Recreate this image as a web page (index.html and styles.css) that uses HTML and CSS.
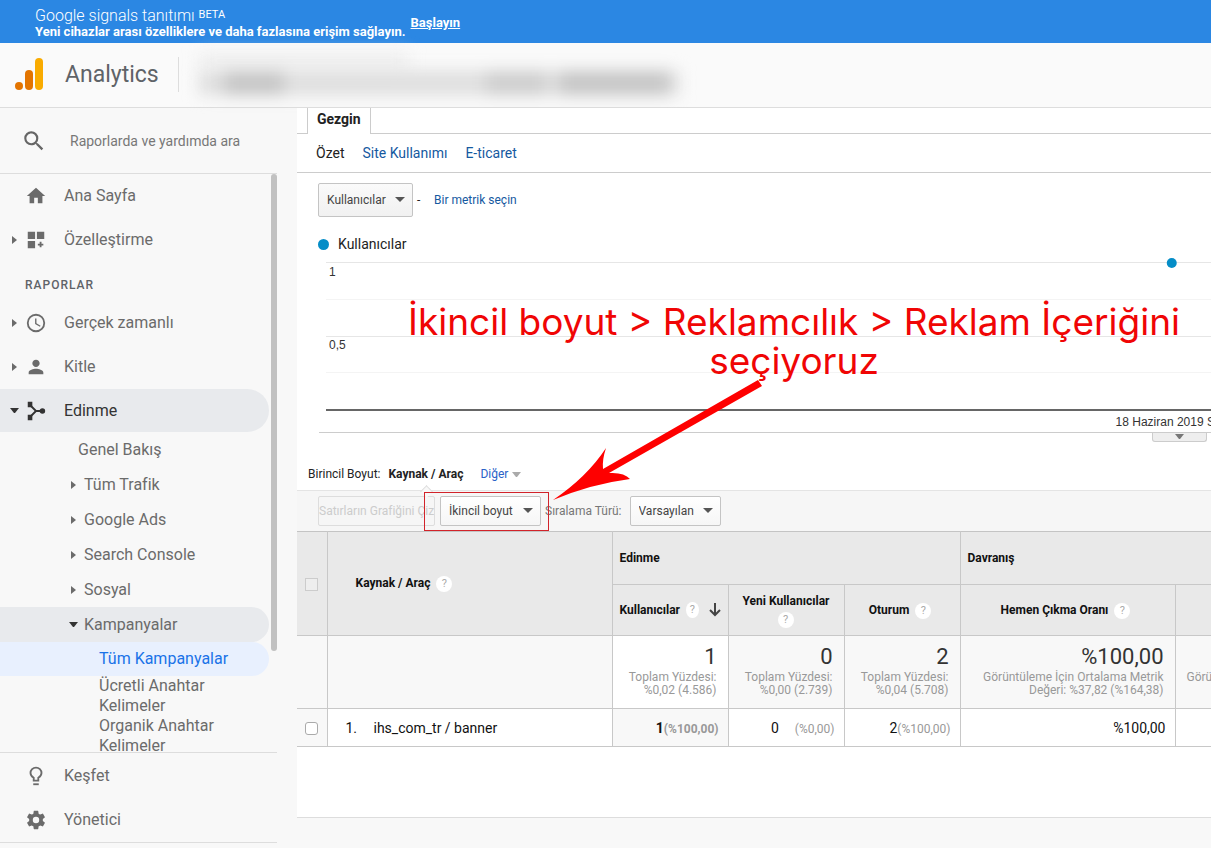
FILE: index.html
```
<!DOCTYPE html>
<html lang="tr">
<head>
    <meta charset="UTF-8">
    <meta name="viewport" content="width=device-width, initial-scale=1.0">
    <title>Analytics</title>
    <link rel="stylesheet" href="styles.css">
</head>
<body>

    <!-- Promo bar -->
    <div class="promo">
        <div class="promo-text">
            <div class="promo-title">Google signals tanıtımı <span class="promo-beta">BETA</span></div>
            <strong>Yeni cihazlar arası özelliklere ve daha fazlasına erişim sağlayın.</strong>
        </div>
        <a href="#" class="promo-link">Başlayın</a>
    </div>

    <!-- Header -->
    <header class="header">
        <svg class="logo" viewBox="0 0 28 32" aria-hidden="true">
            <rect x="20" y="0" width="8" height="32" rx="4" fill="#f9ab00"/>
            <rect x="10" y="12" width="8" height="20" rx="4" fill="#e37400"/>
            <circle cx="4" cy="28" r="4" fill="#e37400"/>
        </svg>
        <span class="brand">Analytics</span>
        <div class="account" aria-hidden="true">
            <div class="smear smear-top"></div>
            <div class="smear smear-main">
                <i class="smear-a"></i>
                <i class="smear-b"></i>
                <i class="smear-c"></i>
            </div>
        </div>
    </header>

    <div class="layout">

        <!-- Sidebar -->
        <aside class="sidebar">
            <div class="search">
                <svg class="search-icon" viewBox="0 0 24 24" aria-hidden="true"><path d="M15.5 14h-.79l-.28-.27A6.47 6.47 0 0 0 16 9.5 6.5 6.5 0 1 0 9.5 16c1.61 0 3.09-.59 4.23-1.57l.27.28v.79l5 4.99L20.49 19l-4.99-5zm-6 0C7.01 14 5 11.99 5 9.5S7.01 5 9.5 5 14 7.01 14 9.5 11.99 14 9.5 14z"/></svg>
                <input type="text" class="search-input" placeholder="Raporlarda ve yardımda ara" aria-label="Raporlarda ve yardımda ara">
            </div>

            <div class="nav-wrap">
                <nav class="nav">
                    <a href="#" class="nav-item">
                        <span class="caret"></span>
                        <svg viewBox="0 0 24 24"><path d="M10 20v-6h4v6h5v-8h3L12 3 2 12h3v8z"/></svg>
                        Ana Sayfa
                    </a>
                    <a href="#" class="nav-item">
                        <span class="caret right"></span>
                        <svg viewBox="0 0 24 24"><path d="M3 3h8v8H3zM13 3h8v8h-8zM3 13h8v8H3zM16 14h2v2h2v2h-2v2h-2v-2h-2v-2h2z"/></svg>
                        Özelleştirme
                    </a>
                    <div class="nav-heading">RAPORLAR</div>
                    <a href="#" class="nav-item">
                        <span class="caret right"></span>
                        <svg viewBox="0 0 24 24"><path d="M12 2a10 10 0 1 0 0 20 10 10 0 0 0 0-20zm0 18a8 8 0 1 1 0-16 8 8 0 0 1 0 16zm.5-13H11v6l5.25 3.15.75-1.23-4.5-2.67z"/></svg>
                        Gerçek zamanlı
                    </a>
                    <a href="#" class="nav-item">
                        <span class="caret right"></span>
                        <svg viewBox="0 0 24 24"><path d="M12 12c2.21 0 4-1.79 4-4s-1.79-4-4-4-4 1.79-4 4 1.79 4 4 4zm0 2c-2.67 0-8 1.34-8 4v2h16v-2c0-2.66-5.33-4-8-4z"/></svg>
                        Kitle
                    </a>
                    <a href="#" class="nav-item open">
                        <span class="caret down"></span>
                        <svg viewBox="0 0 24 24"><path d="M3 2h5v6H3zM3 16h5v6H3z"/><circle cx="19" cy="12" r="3"/><path d="M6 6l6 6h6M6 18l6-6" fill="none" stroke="currentColor" stroke-width="2"/></svg>
                        Edinme
                    </a>
                    <a href="#" class="sub-item plain">Genel Bakış</a>
                    <a href="#" class="sub-item"><span class="caret right"></span>Tüm Trafik</a>
                    <a href="#" class="sub-item"><span class="caret right"></span>Google Ads</a>
                    <a href="#" class="sub-item"><span class="caret right"></span>Search Console</a>
                    <a href="#" class="sub-item"><span class="caret right"></span>Sosyal</a>
                    <a href="#" class="sub-item open"><span class="caret down"></span>Kampanyalar</a>
                    <a href="#" class="leaf-item active">Tüm Kampanyalar</a>
                    <a href="#" class="leaf-item">Ücretli Anahtar Kelimeler</a>
                    <a href="#" class="leaf-item">Organik Anahtar Kelimeler</a>
                </nav>
                <div class="scroll-thumb"></div>
            </div>

            <div class="nav nav-footer">
                <a href="#" class="nav-item">
                    <span class="caret"></span>
                    <svg viewBox="0 0 24 24"><path d="M9 20h6v2H9z"/><path d="M9.500 17v-3C7.500 12.800 6 11 6 8.800a6 6 0 0 1 12 0c0 2.200-1.500 4-3.500 5.200v3z" fill="none" stroke="currentColor" stroke-width="2"/></svg>
                    Keşfet
                </a>
                <a href="#" class="nav-item">
                    <span class="caret"></span>
                    <svg viewBox="0 0 24 24"><path d="M19.430 12.980c.04-.32.07-.64.07-.98s-.03-.66-.07-.98l2.110-1.650c.19-.15.24-.42.12-.64l-2-3.460c-.12-.22-.39-.3-.61-.22l-2.490 1c-.52-.4-1.080-.73-1.690-.98l-.38-2.650A.488.488 0 0 0 14 2h-4c-.25 0-.46.18-.49.42l-.38 2.650c-.61.25-1.170.59-1.690.98l-2.490-1c-.23-.09-.49 0-.61.22l-2 3.460c-.13.22-.07.49.12.64l2.110 1.650c-.04.32-.07.65-.07.98s.03.66.07.98l-2.110 1.650c-.19.15-.24.42-.12.64l2 3.460c.12.22.39.3.61.22l2.490-1c.52.4 1.080.73 1.690.98l.38 2.650c.03.24.24.42.49.42h4c.25 0 .46-.18.49-.42l.38-2.650c.61-.25 1.170-.59 1.690-.98l2.490 1c.23.09.49 0 .61-.22l2-3.460c.12-.22.07-.49-.12-.64zM12 15.500a3.500 3.500 0 1 1 0-7 3.500 3.500 0 0 1 0 7z"/></svg>
                    Yönetici
                </a>
            </div>
        </aside>

        <!-- Report -->
        <main class="main">
            <div class="report">
                <div class="tab-strip"><a href="#" class="tab">Gezgin</a></div>
                <div class="sub-tabs">
                    <span>Özet</span>
                    <a href="#">Site Kullanımı</a>
                    <a href="#">E-ticaret</a>
                </div>

                <div class="metric-row">
                    <span class="select-box metric-select">
                        <select aria-label="Metrik"><option>Kullanıcılar</option></select>
                    </span>
                    <span class="dash">-</span>
                    <a href="#">Bir metrik seçin</a>
                </div>

                <div class="legend"><span class="legend-dot"></span>Kullanıcılar</div>

                <div class="chart-area">
                    <svg class="chart" width="100%" height="177">
                        <g stroke="#f4f4f4">
                            <line x1="7" y1="44.500" x2="100%" y2="44.500"/>
                            <line x1="7" y1="117.500" x2="100%" y2="117.500"/>
                        </g>
                        <g stroke="#e6e6e6">
                            <line x1="7" y1="7.500" x2="100%" y2="7.500"/>
                            <line x1="7" y1="81.500" x2="100%" y2="81.500"/>
                        </g>
                        <line x1="7" y1="155" x2="100%" y2="155" stroke="#666" stroke-width="2"/>
                        <circle cx="95.600%" cy="8" r="5" fill="#058dc7"/>
                        <text x="10" y="21">1</text>
                        <text x="10" y="94">0,5</text>
                        <text x="89.300%" y="171">18 Haziran 2019 S</text>
                    </svg>
                    <button type="button" class="chart-handle" aria-label="Grafiği daralt"><span class="caret down"></span></button>
                </div>

                <div class="dimension-row">
                    <span>Birincil Boyut:</span>
                    <strong class="dimension-current">Kaynak / Araç</strong>
                    <a href="#" class="dimension-other">Diğer <span class="caret down"></span></a>
                </div>

                <div class="toolbar">
                    <button type="button" class="plot-button" disabled>Satırların Grafiğini Çiz</button>
                    <span class="select-box secondary-select">
                        <select aria-label="İkincil boyut"><option>İkincil boyut</option></select>
                        <span class="highlight"></span>
                    </span>
                    <label for="sort-type" class="sort-label">Sıralama Türü:</label>
                    <span class="select-box sort-select">
                        <select id="sort-type"><option>Varsayılan</option></select>
                    </span>
                </div>

                <table class="data-table">
                    <colgroup>
                        <col class="col-check">
                        <col class="col-source">
                        <col class="col-metric">
                        <col class="col-metric">
                        <col class="col-metric">
                        <col class="col-bounce">
                        <col>
                    </colgroup>
                    <thead>
                        <tr class="group-row">
                            <th rowspan="2" class="check-cell"><input type="checkbox" aria-label="Tümünü seç" disabled></th>
                            <th rowspan="2" class="source-head">Kaynak / Araç <button type="button" class="help">?</button></th>
                            <th colspan="3">Edinme</th>
                            <th colspan="2">Davranış</th>
                        </tr>
                        <tr class="metric-head">
                            <th class="sorted">
                                <span class="sorted-inner">Kullanıcılar <button type="button" class="help">?</button>
                                <svg class="sort-arrow" viewBox="0 0 12 14"><path d="M6 0v12M1 7l5 5 5-5" fill="none" stroke="currentColor" stroke-width="2"/></svg></span>
                            </th>
                            <th>Yeni Kullanıcılar <button type="button" class="help">?</button></th>
                            <th>Oturum <button type="button" class="help">?</button></th>
                            <th>Hemen Çıkma Oranı <button type="button" class="help">?</button></th>
                            <th></th>
                        </tr>
                    </thead>
                    <tbody>
                        <tr class="summary-row">
                            <td></td>
                            <td></td>
                            <td class="sorted"><div class="total">1</div>Toplam Yüzdesi: %0,02 (4.586)</td>
                            <td><div class="total">0</div>Toplam Yüzdesi: %0,00 (2.739)</td>
                            <td><div class="total">2</div>Toplam Yüzdesi: %0,04 (5.708)</td>
                            <td><div class="total">%100,00</div>Görüntüleme İçin Ortalama Metrik Değeri: %37,82 (%164,38)</td>
                            <td class="cut"><div class="total">&nbsp;</div>Görü</td>
                        </tr>
                        <tr class="data-row">
                            <td class="check-cell"><input type="checkbox" aria-label="ihs_com_tr / banner satırını seç"></td>
                            <td class="source-cell"><span class="row-number">1.</span>ihs_com_tr / banner</td>
                            <td class="sorted"><strong>1<span class="share">(%100,00)</span></strong></td>
                            <td>0<span class="share spaced">(%0,00)</span></td>
                            <td>2<span class="share">(%100,00)</span></td>
                            <td>%100,00</td>
                            <td></td>
                        </tr>
                    </tbody>
                </table>
            </div>

            <!-- Annotation over the report -->
            <p class="note">İkincil boyut &gt; Reklamcılık &gt; Reklam İçeriğini seçiyoruz</p>
            <svg class="note-arrow" viewBox="0 0 210 122" aria-hidden="true">
                <path d="M0 120Q34 97 53 68Q49 80 50 89L205 0L209 6L56 93Q71 92 77 99Q38 104 0 120z" fill="#fe0000"/>
            </svg>
        </main>
    </div>

</body>
</html>
```
FILE: styles.css
```
:root {
    --blue-bar: #2b87e3;
    --bg: #f8f8f8;
    --line: #ccc;
    --text-nav: #5f6368;
}

* {
    box-sizing: border-box;
}

body {
    margin: 0;
    height: 100vh;
    display: flex;
    flex-direction: column;
    overflow: hidden;
    font-family: Roboto, Arial, sans-serif;
    font-size: 12px;
    color: #222;
    background: var(--bg);
}

a {
    color: #15599f;
    text-decoration: none;
}

button, input, select {
    font-family: inherit;
}

/* --- Promo bar --- */
.promo {
    flex: none;
    display: flex;
    align-items: center;
    gap: 5px;
    height: 43px;
    padding: 2px 35px 0;
    background: var(--blue-bar);
    color: #fff;
    font-size: 13px;
    line-height: 15px;
}

.promo-title {
    font-size: 16px;
    font-weight: 300;
    line-height: 17px;
}

.promo-beta {
    font-size: 11px;
    font-weight: 400;
    vertical-align: 3px;
    line-height: 1;
}

.promo-link {
    color: #fff;
    font-weight: 700;
    text-decoration: underline;
}

/* --- Header --- */
.header {
    flex: none;
    display: flex;
    align-items: center;
    height: 65px;
    padding: 0 15px 2px;
    border-bottom: 1px solid #ddd;
    background: #fafafa;
}

.logo {
    width: 28px;
    height: 32px;
}

.brand {
    margin-left: 22px;
    padding-right: 19px;
    border-right: 1px solid #ddd;
    font-size: 23px;
    line-height: 35px;
    color: var(--text-nav);
}

.account {
    width: 480px;
    margin-left: 20px;
}

.smear {
    filter: blur(8px);
}

.smear-top {
    width: 210px;
    height: 16px;
    background: #eee;
}

.smear-main {
    display: flex;
    justify-content: space-between;
    height: 24px;
    margin-top: 2px;
    background: #dedede;
}

.smear-a,
.smear-b,
.smear-c {
    width: 60px;
    margin-left: 25px;
    background: #c4c4c4;
}

.smear-b {
    margin-left: 190px;
    background: #ccc;
}

.smear-c {
    width: 110px;
    margin: 0 10px 0 0;
}

/* --- Layout --- */
.layout {
    flex: 1;
    display: flex;
    min-height: 0;
}

/* --- Sidebar --- */
.sidebar {
    flex: none;
    display: flex;
    flex-direction: column;
    width: 277px;
    margin-right: 20px;
    padding-bottom: 5px;
}

.search {
    flex: none;
    display: flex;
    align-items: center;
    height: 66px;
    padding-left: 21px;
    border-bottom: 1px solid #ddd;
}

.search-icon {
    width: 26px;
    height: 26px;
    fill: #666;
}

.search-input {
    flex: 1;
    min-width: 0;
    margin-left: 21px;
    border: 0;
    outline: 0;
    background: none;
    font-size: 14px;
}

.search-input::placeholder {
    color: #777;
    opacity: 1;
}

.nav-wrap {
    flex: 1;
    display: flex;
    min-height: 0;
    overflow: hidden;
}

.nav {
    flex: 1;
    display: flex;
    flex-direction: column;
    color: var(--text-nav);
}

.nav a {
    color: #6b6b6b;
    font-size: 16px;
    font-weight: 400;
}

.nav-item {
    flex: none;
    display: flex;
    align-items: center;
    height: 43px;
    margin: 0 2px 1px 0;
    padding-left: 12px;
}

.nav-item svg {
    width: 22px;
    height: 22px;
    margin: 0 17px 0 8px;
    fill: currentColor;
}

.nav-item .caret {
    flex: none;
}

.nav-heading {
    flex: none;
    height: 39px;
    padding: 4px 25px 0;
    font-size: 12px;
    font-weight: 500;
    line-height: 38px;
    letter-spacing: 1px;
}

.nav .nav-item.open {
    margin-bottom: 0;
    border-radius: 0 22px 22px 0;
    background: #e8eaed;
    color: #333;
}

.sub-item {
    flex: none;
    display: flex;
    align-items: center;
    height: 35px;
    margin-right: 2px;
    padding-left: 71px;
}

.sub-item .caret {
    margin-right: 8px;
}

.sub-item.plain {
    padding-left: 78px;
}

.sub-item.open {
    padding-left: 69px;
    border-radius: 0 18px 18px 0;
    background: #e8eaed;
}

.sub-item.open .caret {
    margin-right: 6px;
    color: #333;
}

.leaf-item {
    flex: none;
    margin-right: 2px;
    padding: 0 40px 0 99px;
    line-height: 20px;
}

.nav .leaf-item.active {
    padding-block: 7px;
    border-radius: 0 17px 17px 0;
    background: #e8f0fe;
    color: #1a73e8;
}

.scroll-thumb {
    width: 6px;
    height: 477px;
    border-radius: 3px;
    background: #c1c1c1;
}

.nav-footer {
    flex: none;
    padding-top: 1px;
    border-top: 1px solid #ddd;
    border-bottom: 1px solid #ddd;
}

/* --- Carets --- */
.caret {
    display: inline-block;
    width: 5px;
    height: 8px;
}

.caret.right {
    border: solid transparent;
    border-width: 4px 0 4px 5px;
    border-left-color: currentColor;
}

.caret.down {
    width: 9px;
    height: 5px;
    border: solid transparent;
    border-width: 5px 4px 0;
    border-top-color: currentColor;
}

.nav-item .caret.down {
    margin: 0 -2px;
}

/* --- Report --- */
.main {
    flex: 1;
    position: relative;
    min-width: 0;
    overflow: hidden;
}

.report {
    padding-bottom: 70px;
    border-bottom: 1px solid #ddd;
    background: #fff;
}

.tab-strip {
    display: flex;
    height: 26px;
    padding-left: 10px;
    box-shadow: inset 0 -1px var(--line);
}

.tab {
    padding: 0 9px;
    border: solid var(--line);
    border-width: 0 1px;
    background: #fff;
    color: #222;
    font-size: 14px;
    font-weight: 700;
    line-height: 22px;
}

.sub-tabs {
    display: flex;
    gap: 18px;
    padding: 0 19px;
    border-bottom: 1px solid var(--line);
    font-size: 14px;
    line-height: 38px;
}

.metric-row {
    display: flex;
    align-items: center;
    padding: 10px 21px 0;
}

.dash {
    width: 21px;
    padding-left: 4px;
}

/* --- Selects --- */
.select-box {
    position: relative;
    flex: none;
}

.select-box::after {
    content: "";
    position: absolute;
    right: 8px;
    top: 50%;
    margin-top: -3px;
    border: solid transparent;
    border-width: 5px 5px 0;
    border-top-color: #555;
    pointer-events: none;
}

.select-box select {
    appearance: none;
    width: 100%;
    height: 30px;
    padding: 0 8px;
    border: 1px solid #c4c4c4;
    border-radius: 2px;
    background: linear-gradient(#fff, #f6f6f6);
    color: #444;
    font-size: 12px;
}

.metric-select {
    width: 95px;
}

.metric-select select {
    height: 34px;
    background: linear-gradient(#fafafa, #f1f1f1);
}

/* --- Chart --- */
.legend {
    display: flex;
    align-items: center;
    gap: 9px;
    padding: 17px 21px 0;
    font-size: 14px;
    line-height: 20px;
}

.legend-dot {
    width: 11px;
    height: 11px;
    border-radius: 50%;
    background: #058dc7;
}

.chart-area {
    position: relative;
    margin: 1px 0 0 22px;
}

.chart {
    display: block;
    height: 178px;
    border-bottom: 1px solid var(--line);
}

.chart text {
    font-family: "Liberation Sans", Arial, sans-serif;
    font-size: 12px;
    fill: #333;
}

.chart-handle {
    position: absolute;
    right: 4px;
    top: 100%;
    display: flex;
    justify-content: center;
    width: 55px;
    height: 9px;
    padding: 1px 0 0;
    border: 1px solid var(--line);
    border-top: 0;
    border-radius: 0 0 3px 3px;
    background: #eee;
    color: #777;
}

/* --- Dimension and toolbar rows --- */
.dimension-row {
    display: flex;
    gap: 8px;
    padding: 31px 11px 0;
    line-height: 20px;
}

.dimension-current {
    position: relative;
}

.dimension-current::after {
    content: "";
    position: absolute;
    left: 50%;
    top: 23px;
    width: 8px;
    height: 8px;
    margin-left: -4px;
    border: solid #ddd;
    border-width: 1px 0 0 1px;
    background: var(--bg);
    transform: rotate(45deg);
}

.dimension-other {
    margin-left: 9px;
    color: #2a62c8;
}

.dimension-other .caret {
    margin-left: 1px;
    color: #aaa;
    vertical-align: 1px;
}

.toolbar {
    display: flex;
    align-items: center;
    height: 41px;
    margin-top: 6px;
    padding-left: 21px;
    border-top: 1px solid #e4e4e4;
    background: #f6f6f6;
}

.plot-button {
    width: 117px;
    height: 30px;
    margin-right: 5px;
    padding: 0;
    overflow: hidden;
    border: 1px solid #ddd;
    border-radius: 2px;
    background: none;
    color: #ccc;
    font-size: 12px;
    white-space: nowrap;
}

.secondary-select {
    width: 101px;
}

.highlight {
    position: absolute;
    inset: -4px -8px -5px -16px;
    border: 1px solid #d2232a;
    pointer-events: none;
}

.sort-label {
    margin: 0 8px 0 4px;
    color: #777;
}

.sort-select {
    width: 91px;
}

/* --- Table --- */
.data-table {
    width: 100%;
    table-layout: fixed;
    border-collapse: collapse;
    border-top: 1px solid #c4c4c4;
}

.col-check {
    width: 30px;
}

.col-source {
    width: 285px;
}

.col-metric {
    width: 116px;
}

.col-bounce {
    width: 215px;
}

.data-table th,
.data-table td {
    border: solid #c8c8c8;
    border-width: 0 0 1px 1px;
}

.data-table th:first-child,
.data-table tr > td:first-child {
    border-left: 0;
}

.data-table .metric-head th:first-child {
    border-left: 1px solid #c8c8c8;
}

.data-table th {
    padding: 0 7px;
    background: #e9e9e9;
    color: #111;
    font-weight: 700;
    text-align: left;
}

.group-row th {
    height: 53px;
}

.data-table .source-head {
    padding-left: 28px;
}

.metric-head th {
    height: 51px;
    line-height: 18px;
    text-align: center;
}

.sorted-inner {
    display: flex;
    align-items: center;
    gap: 6px;
    white-space: nowrap;
}

.sort-arrow {
    flex: none;
    width: 12px;
    height: 14px;
    margin-left: 4px;
    color: #444;
}

.help {
    width: 16px;
    height: 16px;
    margin-left: 3px;
    padding: 0;
    border: 0;
    border-radius: 50%;
    background: #fff;
    color: #aaa;
    font-size: 11px;
    line-height: 16px;
}

.metric-head .help {
    margin: 0 4px 0 3px;
}

.metric-head .sorted-inner .help {
    margin: 0;
}

.data-table .check-cell {
    padding: 0;
    text-align: center;
}

.check-cell input {
    appearance: none;
    display: inline-block;
    width: 13px;
    height: 13px;
    margin: 0;
    border: 1px solid #aaa;
    border-radius: 3px;
    background: #fff;
    vertical-align: middle;
}

.check-cell input:disabled {
    border-color: #ccc;
    border-radius: 0;
    background: #eee;
}

.data-table .summary-row td {
    height: 73px;
    padding: 8px 11px 0;
    background: #f8f8f8;
    color: #999;
    line-height: 13px;
    text-align: right;
    vertical-align: top;
}

.data-table .summary-row .sorted {
    background: #fff;
}

.total {
    margin-bottom: 1px;
    color: #333;
    font-size: 22px;
    line-height: 26px;
}

.data-table .summary-row .cut {
    text-align: left;
}

.data-row td {
    height: 38px;
    padding: 0 9px;
    color: #111;
    font-size: 14px;
    text-align: right;
}

.data-table .data-row .source-cell {
    padding-left: 18px;
    text-align: left;
}

.row-number {
    display: inline-block;
    width: 28px;
}

.data-row .check-cell,
.data-row .sorted {
    background: #f8f8f8;
}

.share {
    color: #999;
    font-size: 12px;
}

.share.spaced {
    margin-left: 16px;
}

/* --- Annotation --- */
.note {
    position: absolute;
    left: 80px;
    top: 194px;
    width: 834px;
    margin: 0;
    color: #f00505;
    font-family: Inter, sans-serif;
    font-size: 37px;
    line-height: 39px;
    text-align: center;
}

.note-arrow {
    position: absolute;
    left: 256px;
    top: 272px;
    width: 210px;
    height: 122px;
}
```
